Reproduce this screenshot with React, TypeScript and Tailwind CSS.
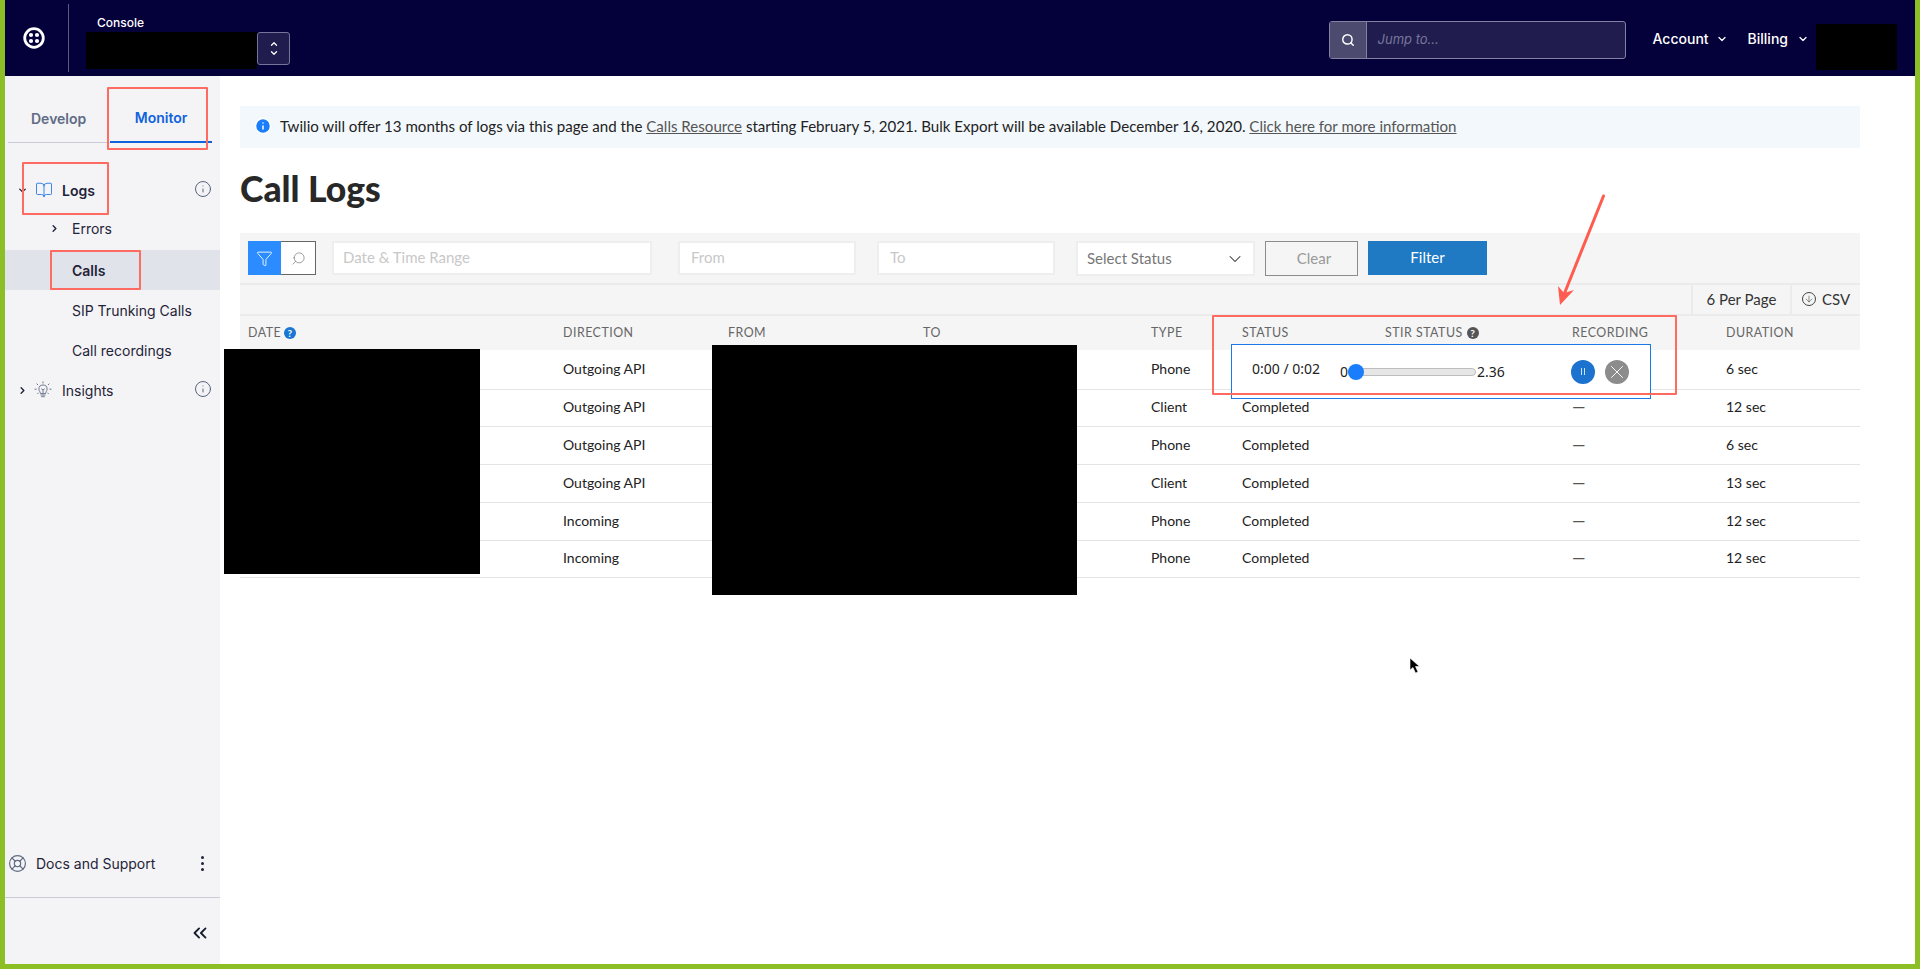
import React from "react";
import {
  BookOpen,
  ChevronDown,
  ChevronRight,
  ChevronUp,
  ChevronsLeft,
  LifeBuoy,
  Search,
  Info,
  X,
  Filter,
  ArrowDown,
} from "lucide-react";

// first row sits under the audio player, so status and recording stay empty there
const rows = [
  { dir: "Outgoing API", type: "Phone", dur: "6 sec", h: "h-[40px]", playing: true },
  { dir: "Outgoing API", type: "Client", dur: "12 sec", h: "h-[37px]" },
  { dir: "Outgoing API", type: "Phone", dur: "6 sec", h: "h-[38px]" },
  { dir: "Outgoing API", type: "Client", dur: "13 sec", h: "h-[38px]" },
  { dir: "Incoming", type: "Phone", dur: "12 sec", h: "h-[38px]" },
  { dir: "Incoming", type: "Phone", dur: "12 sec", h: "h-[37px]" },
];

const gridCols = "grid grid-cols-[315px_165px_195px_228px_91px_143px_187px_154px_1fr] pl-2";

function TwilioLogo() {
  return (
    <svg width="22" height="22" viewBox="0 0 22 22" fill="none">
      <circle cx="11" cy="11" r="9.3" stroke="white" strokeWidth="2.8" />
      <circle cx="8" cy="8" r="2.1" fill="white" />
      <circle cx="14" cy="8" r="2.1" fill="white" />
      <circle cx="8" cy="14" r="2.1" fill="white" />
      <circle cx="14" cy="14" r="2.1" fill="white" />
    </svg>
  );
}

function BulbIcon() {
  return (
    <svg width="18" height="18" viewBox="0 0 18 18" fill="none" stroke="#606b85" strokeWidth="0.9" strokeLinecap="round" className="ml-[6px]">
      <path d="M6.4 12.2c0-1.6-1.5-2.2-1.5-4.1a4.1 4.1 0 0 1 8.2 0c0 1.9-1.5 2.5-1.5 4.1z" />
      <path d="M6.9 14h4.2M7.6 15.7h2.8M9 12V8.8M7.6 8l1.4 1 1.4-1" />
      <path d="M9 .8v1.3M2.9 2.9l.9.9M15.1 2.9l-.9.9M.9 8.2h1.3M15.8 8.2h1.3M3.6 12.7l.7-.7M14.4 12.7l-.7-.7" />
    </svg>
  );
}

function QuestionDot({ className }: { className: string }) {
  return (
    <span className={`inline-flex items-center justify-center w-[12px] h-[12px] rounded-full text-white text-[10px] font-bold leading-none ${className}`}>
      ?
    </span>
  );
}

function Header() {
  return (
    <header className="h-[76px] shrink-0 bg-[#04003a] flex items-center text-white font-['Inter',sans-serif]">
      <div className="w-[64px] h-[68px] flex items-center pl-[18px] border-r border-[#5c5a7c]">
        <TwilioLogo />
      </div>
      <div className="ml-[17px] w-[204px] h-[68px] flex flex-col">
        <div className="text-[12px] font-medium leading-[15px] mt-[11px] ml-[11px]">Console</div>
        <div className="flex items-start mt-[2px]">
          <div className="w-[171px] h-[37px] bg-black" />
          <div className="w-[33px] h-[33px] bg-[#201d4e] border border-[#76749a] rounded-[3px] flex flex-col items-center justify-center">
            <ChevronUp size={10} strokeWidth={3} className="-mb-[1px]" />
            <ChevronDown size={10} strokeWidth={3} />
          </div>
        </div>
      </div>
      <div className="ml-auto flex items-center">
        <div className="mt-[4px] w-[297px] h-[38px] flex border border-[#8482a0] rounded-[3px] bg-[#201d4e]">
          <div className="w-[37px] bg-[#4d4a70] border-r border-[#8482a0] flex items-center justify-center">
            <Search size={14} strokeWidth={2.5} />
          </div>
          <div className="pl-[11px] flex items-center italic text-[13px] text-[#77759a]">Jump to...</div>
        </div>
        <div className="ml-[27px] flex items-center text-[14px] font-medium">
          <span>Account</span>
          <ChevronDown size={12} strokeWidth={2.5} className="ml-[7px] mt-[2px]" />
          <span className="ml-[20px]">Billing</span>
          <ChevronDown size={12} strokeWidth={2.5} className="ml-[9px] mt-[2px]" />
        </div>
        <div className="ml-[7px] mr-[18px] mt-[18px] w-[81px] h-[46px] bg-black" />
      </div>
    </header>
  );
}

function NavRow({ label, bold, active }: { label: string; bold?: boolean; active?: boolean }) {
  return (
    <div className={`h-[40px] flex items-center pl-[67px] text-[14px] text-[#1f2338] ${bold ? "font-semibold" : ""} ${active ? "bg-[#e1e3ea]" : ""}`}>
      {label}
    </div>
  );
}

function Sidebar() {
  return (
    <aside className="w-[215px] shrink-0 bg-[#f4f4f6] flex flex-col font-['Inter',sans-serif]">
      <div className="mt-[11px] ml-[3px] mr-[8px] h-[56px] flex border-b border-[#c9cbd9] text-[14px] font-semibold">
        <div className="w-[102px] flex items-center pt-[7px] pl-[23px] text-[#606b85]">Develop</div>
        <div className="w-[102px] flex items-center justify-center pt-[7px] text-[#0f62dc] border-b-[2px] border-[#0f62dc] -mb-[1px]">Monitor</div>
      </div>
      <div className="mt-[27px] h-[40px] flex items-center text-[14px] font-semibold text-[#1f2338]">
        <ChevronDown size={11} strokeWidth={3} className="ml-[12px]" />
        <BookOpen size={18} strokeWidth={1.25} className="ml-[7px] text-[#2f7fe8]" />
        <span className="ml-[9px]">Logs</span>
        <Info size={18} strokeWidth={1.25} className="ml-auto mr-[8px] -mt-[2px] text-[#4f5a75]" />
      </div>
      <div className="mt-[-2px]">
        <div className="h-[40px] flex items-center text-[14px] text-[#1f2338]">
          <ChevronRight size={11} strokeWidth={3} className="ml-[44px] mr-[12px]" />
          Errors
        </div>
        <div className="h-[2px]" />
        <NavRow label="Calls" bold active />
        <NavRow label="SIP Trunking Calls" />
        <NavRow label="Call recordings" />
      </div>
      <div className="h-[40px] flex items-center text-[14px] text-[#1f2338]">
        <ChevronRight size={11} strokeWidth={3} className="ml-[12px]" />
        <BulbIcon />
        <span className="ml-[10px]">Insights</span>
        <Info size={18} strokeWidth={1.25} className="ml-auto mr-[8px] -mt-[2px] text-[#4f5a75]" />
      </div>
      <div className="mt-auto h-[40px] flex items-center text-[14px] text-[#1f2338]">
        <LifeBuoy size={19} strokeWidth={1.5} className="ml-[3px] text-[#606b85]" />
        <span className="ml-[9px]">Docs and Support</span>
        <div className="ml-auto mr-[16px] flex flex-col gap-[3px]">
          <span className="w-[3px] h-[3px] rounded-full bg-[#1f2338]" />
          <span className="w-[3px] h-[3px] rounded-full bg-[#1f2338]" />
          <span className="w-[3px] h-[3px] rounded-full bg-[#1f2338]" />
        </div>
      </div>
      <div className="mt-[14px] h-[67px] border-t border-[#c9cbd9] flex items-center justify-end pr-[9px] pt-[4px]">
        <ChevronsLeft size={22} strokeWidth={2} className="text-[#121c2d]" />
      </div>
    </aside>
  );
}

function FilterBar() {
  return (
    <div className="h-[52px] bg-[#f5f5f5] border-b-2 border-[#ebebeb] flex items-start pt-[8px] pl-[8px] text-[15px]">
      <div className="w-[68px] h-[34px] flex border border-[#666]">
        <div className="w-[33px] -my-px -ml-px bg-[#2a8cff] flex items-center justify-center text-white">
          <Filter size={17} strokeWidth={1.25} />
        </div>
        <div className="flex-1 bg-white flex items-center justify-center text-[#666]">
          <Search size={15} strokeWidth={1} className="-scale-x-100" />
        </div>
      </div>
      <div className="ml-[16px] w-[320px] h-[34px] bg-white border-2 border-[#eeeeee] flex items-center pl-[9px] pb-[2px] text-[#c8c8c8]">Date &amp; Time Range</div>
      <div className="ml-[26px] w-[178px] h-[34px] bg-white border-2 border-[#eeeeee] flex items-center pl-[11px] pb-[2px] text-[#c8c8c8]">From</div>
      <div className="ml-[21px] w-[178px] h-[34px] bg-white border-2 border-[#eeeeee] flex items-center pl-[11px] pb-[2px] text-[#c8c8c8]">To</div>
      <div className="ml-[21px] w-[179px] h-[35px] bg-white border-2 border-[#eeeeee] flex items-center pl-[9px] pr-[8px] text-[#777] justify-between">
        Select Status
        <ChevronDown size={20} strokeWidth={1.25} className="text-[#333]" />
      </div>
      <div className="ml-[10px] w-[93px] h-[35px] border border-[#8c8c8c] flex items-center justify-center pl-[5px] text-[#999]">Clear</div>
      <div className="ml-[10px] w-[119px] h-[34px] bg-[#2079c3] flex items-center justify-center pb-[2px] text-white">Filter</div>
    </div>
  );
}

function CallTable() {
  return (
    <div className="text-[14px] text-[#222]">
      <FilterBar />
      <div className="h-[31px] bg-[#f5f5f5] border-b-2 border-[#ebebeb] flex justify-end text-[15px] text-[#333]">
        <div className="w-[99px] border-l-2 border-[#ebebeb] flex items-center justify-center">6 Per Page</div>
        <div className="w-[70px] border-l-2 border-[#ebebeb] flex items-center justify-center gap-[6px]">
          <span className="w-[14px] h-[14px] -mt-[2px] rounded-full border border-[#444] flex items-center justify-center">
            <ArrowDown size={10} strokeWidth={1.25} />
          </span>
          CSV
        </div>
      </div>
      <div className={`${gridCols} h-[34px] bg-[#f5f5f5] items-center text-[12.4px] tracking-[0.04em] text-[#666]`}>
        <div className="flex items-center gap-[3px]">DATE <QuestionDot className="bg-[#1976d2]" /></div>
        <div>DIRECTION</div>
        <div>FROM</div>
        <div>TO</div>
        <div>TYPE</div>
        <div>STATUS</div>
        <div className="flex items-center gap-[4px]">STIR STATUS <QuestionDot className="bg-[#555]" /></div>
        <div>RECORDING</div>
        <div>DURATION</div>
      </div>
      {rows.map((row, i) => (
        <div key={i} className={`${gridCols} ${row.h} items-center pb-[3px] border-b border-[#e4e4e4]`}>
          <div />
          <div>{row.dir}</div>
          <div />
          <div />
          <div>{row.type}</div>
          <div>{row.playing ? "" : "Completed"}</div>
          <div />
          <div className="text-[17px] leading-none text-[#555]">{row.playing ? "" : "—"}</div>
          <div>{row.dur}</div>
        </div>
      ))}
    </div>
  );
}

function Player() {
  return (
    <div className="absolute left-[1226px] top-[268px] w-[420px] h-[55px] bg-white border border-[#1b7ae8] flex items-center text-[14px] text-[#222]">
      <span className="ml-[20px] -mt-[6px] w-[89px]">0:00 / 0:02</span>
      <span className="-ml-[1px] w-[8px]">0</span>
      <div className="relative w-[128px] h-[8px] rounded-full bg-[#e6e6e6] border border-[#bdbdbd]">
        <span className="absolute -left-[1px] -top-[5px] w-[16px] h-[16px] rounded-full bg-[#1a7dfb]" />
      </div>
      <span className="ml-[1px] w-[30px]">2.36</span>
      <div className="ml-[64px] w-[24px] h-[24px] rounded-full bg-[#1b72cf] flex items-center justify-center gap-[2px]">
        <span className="w-[1px] h-[7px] bg-[#cfe3f6]" />
        <span className="w-[1px] h-[7px] bg-[#cfe3f6]" />
      </div>
      <div className="ml-[10px] w-[24px] h-[24px] rounded-full bg-[#8c8c8c] flex items-center justify-center text-white">
        <X size={22} strokeWidth={1} />
      </div>
    </div>
  );
}

function Annotations() {
  return (
    <>
      {/* red callouts drawn over the screenshot */}
      <div className="absolute left-[102px] top-[11px] w-[101px] h-[63px] border-2 border-[#ff6b60] rounded-[1px]" />
      <div className="absolute left-[17px] top-[86px] w-[87px] h-[53px] border-2 border-[#ff6b60] rounded-[1px]" />
      <div className="absolute left-[45px] top-[174px] w-[91px] h-[40px] border-2 border-[#ff6b60] rounded-[1px]" />
      <div className="absolute left-[1207px] top-[239px] w-[465px] h-[80px] border-2 border-[#ff6b60] rounded-[1px]" />
      <svg className="absolute left-[1545px] top-[115px]" width="60" height="120" viewBox="0 0 60 120" fill="none">
        <path d="M53.5 5 L13 106" stroke="#ff5c50" strokeWidth="3" strokeLinecap="round" />
        <path d="M10 114 L8 95 L14 102 L24 99 Z" fill="#ff5c50" />
      </svg>
      <svg className="absolute left-[1404px] top-[581px]" width="12" height="18" viewBox="0 0 12 18">
        <path d="M1 1 L1 13 L4 10.5 L6.5 16 L9 15 L6.5 9.5 L10.5 9.5 Z" fill="#000" stroke="#fff" strokeWidth="0.6" />
      </svg>
    </>
  );
}

export default function App() {
  return (
    <div className="w-[1920px] h-[969px] overflow-hidden bg-[#8cbf26] px-[5px] pb-[5px] flex flex-col">
      <Header />
      <div className="flex-1 flex min-h-0 relative bg-white">
        <Sidebar />
        <main className="flex-1 pl-[20px] pr-[55px] pt-[30px] font-['Lato',sans-serif]">
          <div className="h-[42px] bg-[#f3f8fc] flex items-center pl-[14px] pb-[2px] text-[15.1px] text-[#222]">
            <Info size={18} strokeWidth={2} className="fill-[#1a7dfb] text-white mr-[8px]" />
            <span>
              Twilio will offer 13 months of logs via this page and the{" "}
              <span className="underline text-[#555]">Calls Resource</span> starting February 5, 2021. Bulk Export will be available December 16, 2020.{" "}
              <span className="underline text-[#555]">Click here for more information</span>
            </span>
          </div>
          <h1 className="mt-[22px] mb-[26px] h-[37px] leading-[37px] text-[35.5px] font-black text-[#282828]">Call Logs</h1>
          <CallTable />
        </main>
        {/* redacted blocks */}
        <div className="absolute left-[219px] top-[273px] w-[256px] h-[225px] bg-black" />
        <div className="absolute left-[707px] top-[269px] w-[365px] h-[250px] bg-black" />
        <Player />
        <Annotations />
      </div>
    </div>
  );
}
